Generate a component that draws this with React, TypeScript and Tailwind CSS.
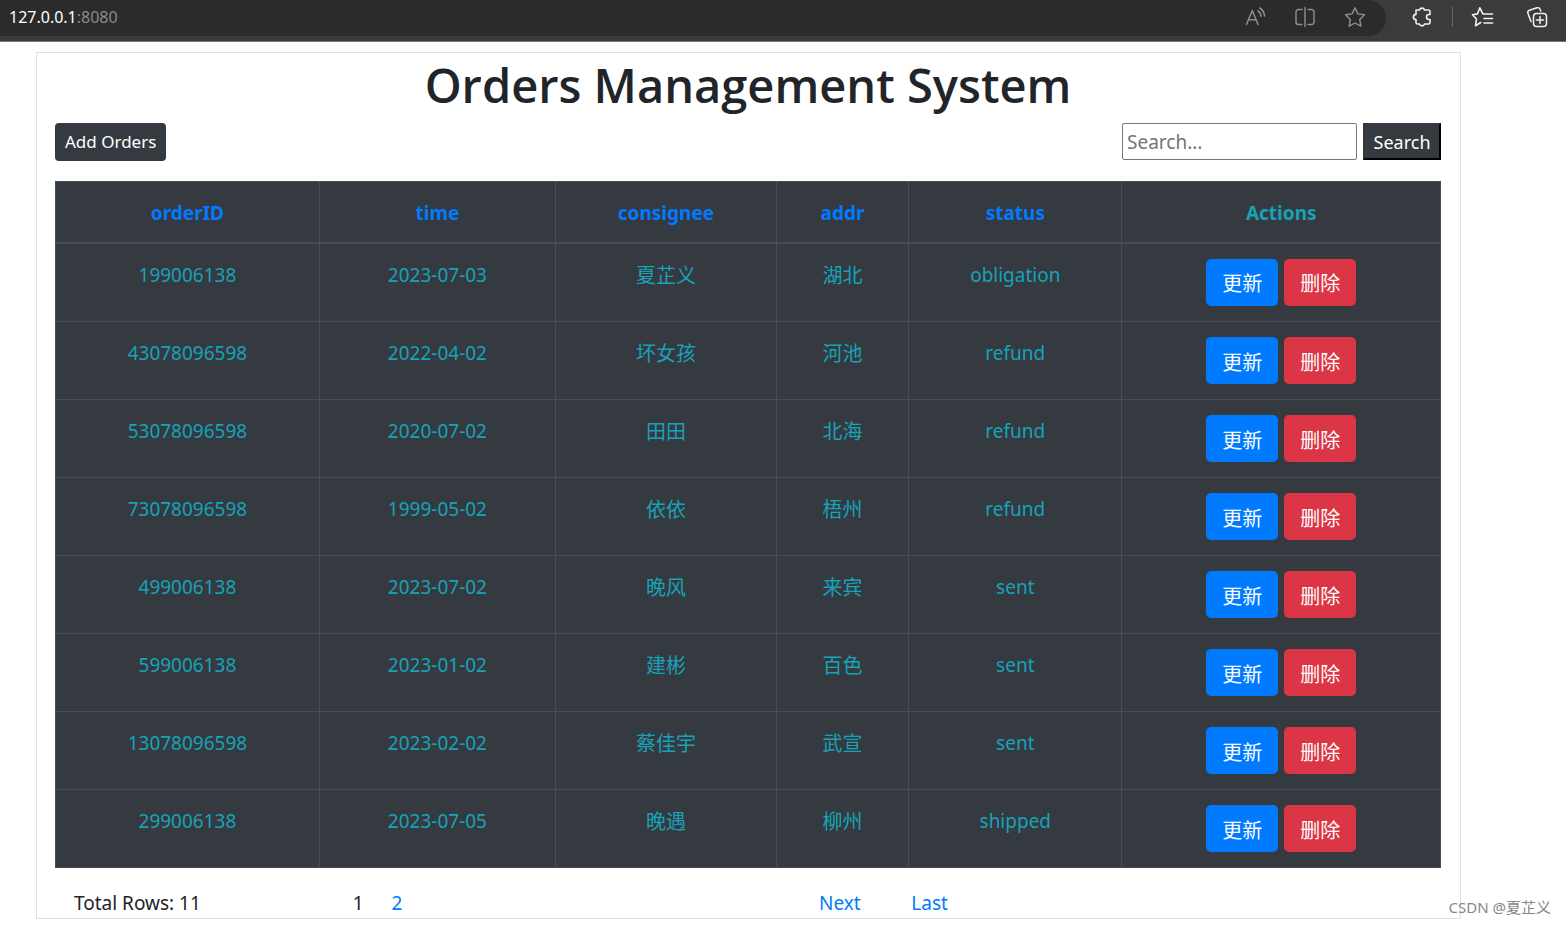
import React from "react";

type Order = { id: string; time: string; consignee: string; addr: string; status: string };

const orders: Order[] = [
  { id: "199006138", time: "2023-07-03", consignee: "夏芷义", addr: "湖北", status: "obligation" },
  { id: "43078096598", time: "2022-04-02", consignee: "坏女孩", addr: "河池", status: "refund" },
  { id: "53078096598", time: "2020-07-02", consignee: "田田", addr: "北海", status: "refund" },
  { id: "73078096598", time: "1999-05-02", consignee: "依依", addr: "梧州", status: "refund" },
  { id: "499006138", time: "2023-07-02", consignee: "晚风", addr: "来宾", status: "sent" },
  { id: "599006138", time: "2023-01-02", consignee: "建彬", addr: "百色", status: "sent" },
  { id: "13078096598", time: "2023-02-02", consignee: "蔡佳宇", addr: "武宣", status: "sent" },
  { id: "299006138", time: "2023-07-05", consignee: "晚遇", addr: "柳州", status: "shipped" },
];

const columns = ["orderID", "time", "consignee", "addr", "status"];

function IconButton({ label, className, children }: { label: string; className: string; children: React.ReactNode }) {
  return (
    <button type="button" aria-label={label} className={className}>
      <svg viewBox="0 0 24 24" className="size-6" fill="none" stroke="currentColor" strokeLinecap="round" strokeLinejoin="round">
        {children}
      </svg>
    </button>
  );
}

function BrowserBar() {
  return (
    <header className="flex h-[42px] items-start border-b border-[#767676] bg-[#3b3b3b]">
      <div className="flex h-9 grow items-center justify-between rounded-r-full bg-[#2b2b2b] pr-[19px] pb-0.5 pl-[9px]">
        <p className="text-base text-[#8a8a8a]">
          <span className="text-white">127.0.0.1</span>:8080
        </p>
        <div className="flex gap-[26px] text-[#909090]">
          <IconButton label="Read aloud" className="block">
            <path d="M3.500 19.500 9.300 5.500 15.100 19.500M5.600 14.700h7.500M15 5.800a7 7 0 0 1 3 5.400M16.800 3a10 10 0 0 1 4.700 8" strokeWidth="1.5" />
          </IconButton>
          <IconButton label="Split screen" className="block">
            <path d="M12 2.500v19M9 4.500H5.500a2.500 2.500 0 0 0-2.500 2.500v10a2.500 2.500 0 0 0 2.500 2.500H9M15 4.500h3.500A2.500 2.500 0 0 1 21 7v10a2.500 2.500 0 0 1-2.500 2.500H15" strokeWidth="1.4" />
          </IconButton>
          <IconButton label="Add to favorites" className="block">
            <path d="M12 2.800 14.900 8.900 21.500 9.800 16.700 14.400 17.900 21.200 12 18 6.100 21.200 7.300 14.400 2.500 9.800 9.100 8.900z" strokeWidth="1.4" />
          </IconButton>
        </div>
      </div>
      <div className="flex h-[34px] items-center pr-[17px] pl-6 text-[#f0f0f0]">
        <IconButton label="Extensions" className="block">
          <path d="M6 5h3.500a2.600 2.600 0 0 1 5 0H18.500a1.500 1.500 0 0 1 1.500 1.500V9.500h-1a2.500 2.500 0 0 0 0 5h1v3a1.500 1.500 0 0 1-1.500 1.500H14.500a2.600 2.600 0 0 1-5 0H7.500a1.500 1.500 0 0 1-1.500-1.500V14.600a2.600 2.600 0 0 1 0-5.200z" strokeWidth="1.600" />
        </IconButton>
        <span className="mx-[18px] h-5 w-px bg-[#696969]" />
        <IconButton label="Favorites" className="block">
          <path d="M15 9 11.800 8.900 8.900 2.800 6.400 8.900 1.500 9.800 5.500 14 4.500 20.700 9.800 17.500M14.500 9H21.500M13 13.500H21.500M13 18H21.500" strokeWidth="1.600" />
        </IconButton>
        <IconButton label="Collections" className="ml-[30px] block">
          <path d="M11.500 8.500H18.500a3 3 0 0 1 3 3v7a3 3 0 0 1-3 3H11.500a3 3 0 0 1-3-3v-7a3 3 0 0 1 3-3zM15 11.500v7M11.500 15h7M6 16.500 3 8.500A2.500 2.500 0 0 1 4.500 5.300L12 2.800A2.500 2.500 0 0 1 15.200 4.400L15.800 6" strokeWidth="1.500" />
        </IconButton>
      </div>
    </header>
  );
}

export default function App() {
  return (
    <div className="relative min-h-screen bg-white font-['Noto_Sans','Noto_Sans_CJK_SC',sans-serif] text-[19px] leading-[30px] text-[#212529]">
      <BrowserBar />
      <main className="mt-[10px] ml-9 w-[91%] border border-[#dee2e6] pr-[19px] pl-[18px]">
        <h1 className="pt-0.5 text-center font-['Open_Sans',sans-serif] text-[47px] leading-[60px] font-semibold">Orders Management System</h1>
        <div className="mt-2 mb-5 flex items-start justify-between">
          <button type="button" className="h-[38px] rounded bg-[#343a40] px-[10px] text-[17px] text-white">Add Orders</button>
          <form className="flex gap-1.5" onSubmit={(e) => e.preventDefault()}>
            <input
              type="text"
              aria-label="Search orders"
              placeholder="Search..."
              className="h-[37px] w-[235px] rounded-xs border border-[#767676] px-1 placeholder:text-[#757575]"
            />
            <button type="submit" className="h-[37px] w-[78px] border-2 border-t-[#343a40] border-r-black border-b-black border-l-[#343a40] bg-[#343a40] text-lg text-white">
              Search
            </button>
          </form>
        </div>
        <table className="w-full table-fixed border-collapse bg-[#343a40] text-center text-[#17a2b8]">
          <colgroup>
            <col className="w-[19.05%]" />
            <col className="w-[17.05%]" />
            <col className="w-[15.95%]" />
            <col className="w-[9.55%]" />
            <col className="w-[15.4%]" />
            <col />
          </colgroup>
          <thead>
            <tr className="h-[61px]">
              {columns.map((c) => (
                <th key={c} className="border border-b-2 border-[#454d55] pt-0.5 font-bold">
                  <a href="#sort" className="text-[#007bff]">{c}</a>
                </th>
              ))}
              <th className="border border-b-2 border-[#454d55] pt-0.5 font-bold">Actions</th>
            </tr>
          </thead>
          <tbody>
            {orders.map((o) => (
              <tr key={o.id} className="h-[78px] align-top first:h-[79px]">
                <td className="border border-[#454d55] pt-4">{o.id}</td>
                <td className="border border-[#454d55] pt-4">{o.time}</td>
                <td className="border border-[#454d55] pt-[17px] text-xl leading-[30px]">{o.consignee}</td>
                <td className="border border-[#454d55] pt-[17px] text-xl leading-[30px]">{o.addr}</td>
                <td className="border border-[#454d55] pt-4">{o.status}</td>
                <td className="border border-[#454d55] pt-[15px]">
                  <div className="flex justify-center gap-1.5 text-xl text-white">
                    <a href="#update" className="flex h-[47px] w-[72px] items-center justify-center rounded-[5px] bg-[#007bff] pt-1">更新</a>
                    <a href="#delete" className="flex h-[47px] w-[72px] items-center justify-center rounded-[5px] bg-[#dc3545] pt-1">删除</a>
                  </div>
                </td>
              </tr>
            ))}
          </tbody>
        </table>
        <nav aria-label="Pagination" className="mt-[21px] grid grid-cols-12 px-[19px] leading-[29px]">
          <span className="col-span-2">Total Rows: 11</span>
          <span className="col-span-4 flex gap-7 pl-[54px]">
            <span>1</span>
            <a href="#page-2" className="text-[#007bff]">2</a>
          </span>
          <a href="#next" className="col-span-1 pl-[71px] text-[#007bff]">Next</a>
          <a href="#last" className="col-span-1 pl-[51px] text-[#007bff]">Last</a>
        </nav>
      </main>
      <span className="absolute right-[15px] bottom-1 text-[15px] leading-[28px] text-[#888888]">CSDN @夏芷义</span>
    </div>
  );
}
